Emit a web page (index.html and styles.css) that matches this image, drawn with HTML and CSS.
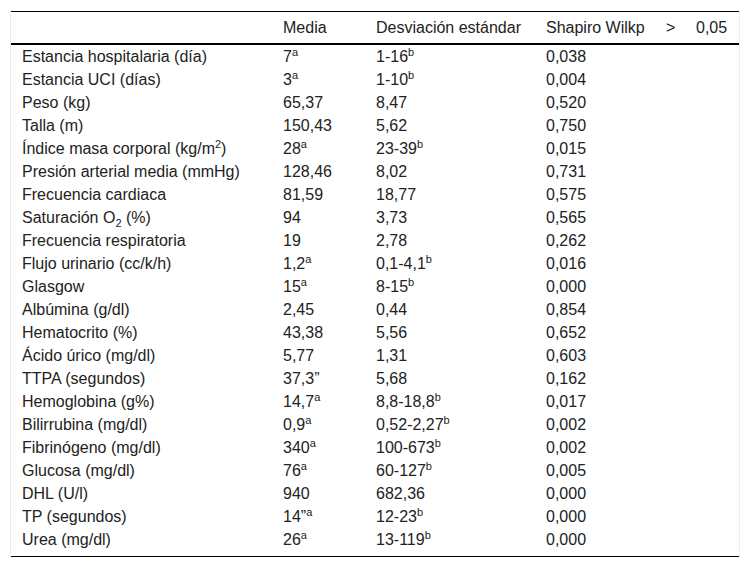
FILE: index.html
```html
<!DOCTYPE html>
<html lang="es">
<head>
<meta charset="utf-8">
<title>Tabla</title>
<link rel="stylesheet" href="styles.css">
</head>
<body>
<div class="wrap">
<table class="data">
<colgroup>
<col class="c1"><col class="c2"><col class="c3"><col class="c4"><col class="c5"><col class="c6">
</colgroup>
<thead>
<tr><th></th><th>Media</th><th>Desviación estándar</th><th>Shapiro Wilkp</th><th>&gt;</th><th>0,05</th></tr>
</thead>
<tbody>
<tr><td>Estancia hospitalaria (día)</td><td>7<sup>a</sup></td><td>1-16<sup>b</sup></td><td>0,038</td><td></td><td></td></tr>
<tr><td>Estancia UCI (días)</td><td>3<sup>a</sup></td><td>1-10<sup>b</sup></td><td>0,004</td><td></td><td></td></tr>
<tr><td>Peso (kg)</td><td>65,37</td><td>8,47</td><td>0,520</td><td></td><td></td></tr>
<tr><td>Talla (m)</td><td>150,43</td><td>5,62</td><td>0,750</td><td></td><td></td></tr>
<tr><td>Índice masa corporal (kg/m<sup>2</sup>)</td><td>28<sup>a</sup></td><td>23-39<sup>b</sup></td><td>0,015</td><td></td><td></td></tr>
<tr><td>Presión arterial media (mmHg)</td><td>128,46</td><td>8,02</td><td>0,731</td><td></td><td></td></tr>
<tr><td>Frecuencia cardiaca</td><td>81,59</td><td>18,77</td><td>0,575</td><td></td><td></td></tr>
<tr><td>Saturación O<sub>2</sub> (%)</td><td>94</td><td>3,73</td><td>0,565</td><td></td><td></td></tr>
<tr><td>Frecuencia respiratoria</td><td>19</td><td>2,78</td><td>0,262</td><td></td><td></td></tr>
<tr><td>Flujo urinario (cc/k/h)</td><td>1,2<sup>a</sup></td><td>0,1-4,1<sup>b</sup></td><td>0,016</td><td></td><td></td></tr>
<tr><td>Glasgow</td><td>15<sup>a</sup></td><td>8-15<sup>b</sup></td><td>0,000</td><td></td><td></td></tr>
<tr><td>Albúmina (g/dl)</td><td>2,45</td><td>0,44</td><td>0,854</td><td></td><td></td></tr>
<tr><td>Hematocrito (%)</td><td>43,38</td><td>5,56</td><td>0,652</td><td></td><td></td></tr>
<tr><td>Ácido úrico (mg/dl)</td><td>5,77</td><td>1,31</td><td>0,603</td><td></td><td></td></tr>
<tr><td>TTPA (segundos)</td><td>37,3”</td><td>5,68</td><td>0,162</td><td></td><td></td></tr>
<tr><td>Hemoglobina (g%)</td><td>14,7<sup>a</sup></td><td>8,8-18,8<sup>b</sup></td><td>0,017</td><td></td><td></td></tr>
<tr><td>Bilirrubina (mg/dl)</td><td>0,9<sup>a</sup></td><td>0,52-2,27<sup>b</sup></td><td>0,002</td><td></td><td></td></tr>
<tr><td>Fibrinógeno (mg/dl)</td><td>340<sup>a</sup></td><td>100-673<sup>b</sup></td><td>0,002</td><td></td><td></td></tr>
<tr><td>Glucosa (mg/dl)</td><td>76<sup>a</sup></td><td>60-127<sup>b</sup></td><td>0,005</td><td></td><td></td></tr>
<tr><td>DHL (U/l)</td><td>940</td><td>682,36</td><td>0,000</td><td></td><td></td></tr>
<tr><td>TP (segundos)</td><td>14”<sup>a</sup></td><td>12-23<sup>b</sup></td><td>0,000</td><td></td><td></td></tr>
<tr class="last"><td>Urea (mg/dl)</td><td>26<sup>a</sup></td><td>13-119<sup>b</sup></td><td>0,000</td><td></td><td></td></tr>
</tbody>
</table>
</div>
</body>
</html>
```
FILE: styles.css
```css
html, body {
  margin: 0;
  padding: 0;
  background: #fff;
}
body {
  padding: 11px 0 0 10px;
  font-family: "Liberation Sans", Arial, sans-serif;
  font-size: 16px;
  color: #222;
}
.wrap {
  width: 728px;
  border-left: 1px solid #ececec;
  border-right: 1px solid #ececec;
}
.data {
  width: 728px;
  border-collapse: collapse;
  table-layout: fixed;
  border-top: 1px solid #000;
  border-bottom: 1px solid #000;
}
.c1 { width: 261px; }
.c2 { width: 93px; }
.c3 { width: 170px; }
.c4 { width: 120px; }
.c5 { width: 30px; }
.c6 { width: 54px; }
.data th {
  font-weight: normal;
  text-align: left;
  height: 31px;
  padding: 0 0 0 11px;
  vertical-align: middle;
  border-bottom: 2px solid #000;
  white-space: nowrap;
}
.data td {
  height: 23px;
  padding: 0 0 0 11px;
  line-height: 23px;
  vertical-align: top;
  white-space: nowrap;
}
.data tr.last td {
  padding-bottom: 5px;
}
sup {
  font-size: 11px;
  line-height: 0;
  vertical-align: 6px;
}
sub {
  font-size: 11px;
  line-height: 0;
  vertical-align: -4px;
}
```
